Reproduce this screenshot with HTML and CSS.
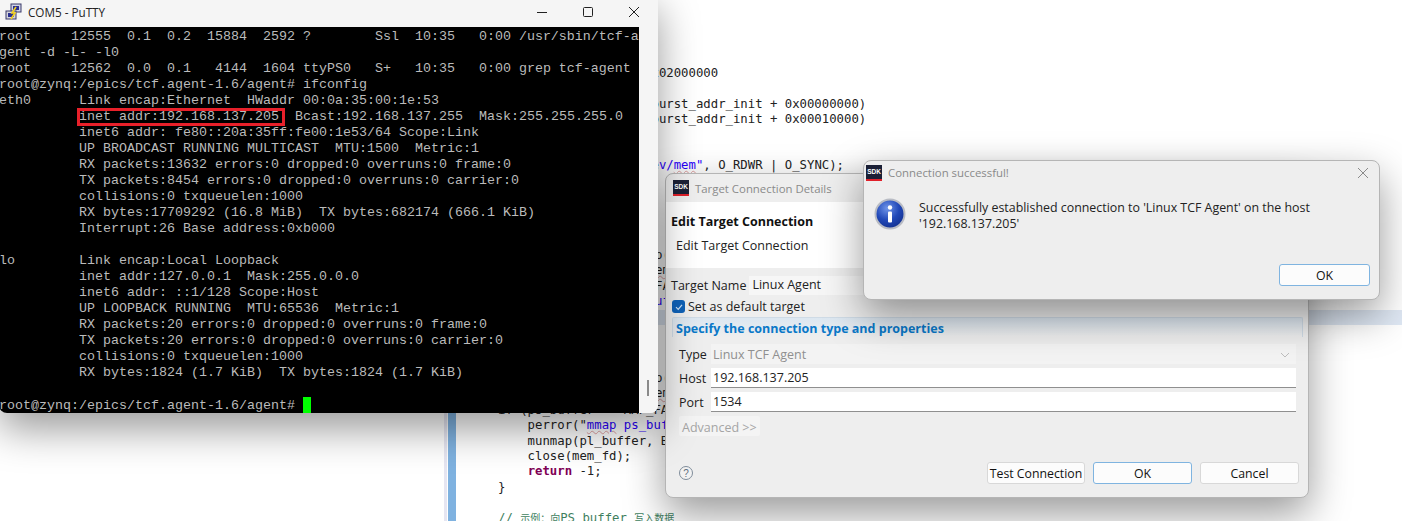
FILE: index.html
```html
<!DOCTYPE html>
<html lang="en">
<head>
    <meta charset="UTF-8">
    <meta name="viewport" content="width=device-width, initial-scale=1.0">
    <title>COM5 - PuTTY</title>
    <link rel="stylesheet" href="styles.css">
</head>
<body>
    <!-- Code editor behind the windows -->
    <div class="editor">
        <div class="editor-gutter"></div>
        <div class="highlight-row"></div>
        <pre class="code code-top">x02000000

burst_addr_init + 0x00000000)
burst_addr_init + 0x00010000)


<span class="str">ev/<span class="squiggle">mem</span>"</span>, O_RDWR | O_SYNC);</pre>
        <pre class="code code-strip">p(
<span class="squiggle">em</span>
FA
<span class="str">uf</span>




p(
<span class="squiggle">em</span></pre>
        <pre class="code code-bottom">if (ps_buffer == MAP_FAILED) {
    perror("<span class="str"><span class="squiggle">mmap</span> ps_buffer</span>
    munmap(pl_buffer, BUF
    close(mem_fd);
    <span class="kw">return</span> -1;
}

<span class="cmt">// <span class="cjk">示例：向</span>PS buffer <span class="cjk">写入数据</span></span></pre>
    </div>

    <!-- Target connection dialog -->
    <div class="window target-dialog">
        <div class="title-bar">
            <span class="sdk-icon">SDK</span>
            <span class="title-text">Target Connection Details</span>
        </div>
        <div class="dialog-banner">
            <h2>Edit Target Connection</h2>
            <p>Edit Target Connection</p>
        </div>
        <div class="dialog-body">
            <div class="name-row">
                <label>Target Name</label>
                <div class="name-input">Linux Agent</div>
            </div>
            <div class="check-row">
                <span class="checkbox">
                    <svg width="10" height="10" viewBox="0 0 10 10"><path d="M2 5.2 4.2 7.4 8 2.8" fill="none" stroke="#cfe3f7" stroke-width="1.2"/></svg>
                </span>
                <span>Set as default target</span>
            </div>
            <div class="props-panel">
                <div class="props-header">Specify the connection type and properties</div>
                <div class="props-grid">
                    <label>Type</label>
                    <div class="field field-disabled">
                        <span>Linux TCF Agent</span>
                        <svg width="10" height="6" viewBox="0 0 10 6"><path d="M1 1 5 5 9 1" fill="none" stroke="#bdbdbd"/></svg>
                    </div>
                    <label>Host</label>
                    <div class="field">192.168.137.205</div>
                    <label>Port</label>
                    <div class="field">1534</div>
                </div>
                <div class="advanced">Advanced &gt;&gt;</div>
            </div>
            <div class="dialog-footer">
                <svg class="help-icon" width="16" height="16" viewBox="0 0 16 16">
                    <circle cx="8" cy="8" r="6.5" fill="#f2f2f2" stroke="#7f8c9a"/>
                    <text x="8" y="11.5" text-anchor="middle" font-size="10" fill="#5f6f80" font-family="Liberation Sans">?</text>
                </svg>
                <div class="footer-buttons">
                    <button class="btn btn-test">Test Connection</button>
                    <button class="btn btn-primary btn-wide">OK</button>
                    <button class="btn btn-wide">Cancel</button>
                </div>
            </div>
        </div>
    </div>

    <!-- Success message box -->
    <div class="window message-box">
        <div class="title-bar">
            <span class="sdk-icon">SDK</span>
            <span class="title-text">Connection successful!</span>
            <svg class="close-icon" width="12" height="12" viewBox="0 0 12 12"><path d="M1 1 11 11M11 1 1 11" stroke="#8a8a8a" stroke-width="1"/></svg>
        </div>
        <div class="message-body">
            <svg class="info-icon" width="32" height="32" viewBox="0 0 32 32">
                <defs>
                    <radialGradient id="infoFill" cx="40%" cy="30%" r="75%">
                        <stop offset="0" stop-color="#6f94e8"/>
                        <stop offset="0.55" stop-color="#2148b8"/>
                        <stop offset="1" stop-color="#122f8c"/>
                    </radialGradient>
                </defs>
                <circle cx="16" cy="16" r="14.5" fill="url(#infoFill)" stroke="#b9bcc4" stroke-width="2"/>
                <circle cx="16" cy="9.5" r="2.2" fill="#fff"/>
                <rect x="14" y="13.5" width="4" height="11" rx="1" fill="#fff"/>
            </svg>
            <p>Successfully established connection to 'Linux TCF Agent' on the host<br>'192.168.137.205'</p>
        </div>
        <div class="message-footer">
            <button class="btn btn-primary btn-message">OK</button>
        </div>
    </div>

    <!-- PuTTY terminal -->
    <div class="window putty">
        <div class="putty-title">
            <svg class="putty-icon" width="18" height="18" viewBox="0 0 18 18">
                <rect x="6" y="1" width="10" height="8" fill="#cfd3e6" stroke="#3a3a6a"/>
                <rect x="8" y="3" width="6" height="4" fill="#2a2f8f"/>
                <rect x="1" y="8" width="10" height="8" fill="#d4d4dc" stroke="#3a3a6a"/>
                <rect x="3" y="10" width="6" height="4" fill="#2a2f8f"/>
                <path d="M11 4 7 10 10 10 6 16" fill="none" stroke="#f0d020" stroke-width="1.6"/>
            </svg>
            <span class="putty-name">COM5 - PuTTY</span>
            <div class="window-controls">
                <svg width="12" height="12" viewBox="0 0 12 12"><path d="M1 6.5H11" stroke="#222"/></svg>
                <svg width="12" height="12" viewBox="0 0 12 12"><rect x="1.5" y="1.5" width="9" height="9" rx="1" fill="none" stroke="#222"/></svg>
                <svg width="12" height="12" viewBox="0 0 12 12"><path d="M1 1 11 11M11 1 1 11" stroke="#222"/></svg>
            </div>
        </div>
        <div class="putty-content">
            <pre class="terminal">root     12555  0.1  0.2  15884  2592 ?        Ssl  10:35   0:00 /usr/sbin/tcf-a
gent -d -L- -l0
root     12562  0.0  0.1   4144  1604 ttyPS0   S+   10:35   0:00 grep tcf-agent
root@zynq:/epics/tcf.agent-1.6/agent# ifconfig
eth0      Link encap:Ethernet  HWaddr 00:0a:35:00:1e:53
          <span class="ip-mark">inet addr:192.168.137.205</span>  Bcast:192.168.137.255  Mask:255.255.255.0
          inet6 addr: fe80::20a:35ff:fe00:1e53/64 Scope:Link
          UP BROADCAST RUNNING MULTICAST  MTU:1500  Metric:1
          RX packets:13632 errors:0 dropped:0 overruns:0 frame:0
          TX packets:8454 errors:0 dropped:0 overruns:0 carrier:0
          collisions:0 txqueuelen:1000
          RX bytes:17709292 (16.8 MiB)  TX bytes:682174 (666.1 KiB)
          Interrupt:26 Base address:0xb000

lo        Link encap:Local Loopback
          inet addr:127.0.0.1  Mask:255.0.0.0
          inet6 addr: ::1/128 Scope:Host
          UP LOOPBACK RUNNING  MTU:65536  Metric:1
          RX packets:20 errors:0 dropped:0 overruns:0 frame:0
          TX packets:20 errors:0 dropped:0 overruns:0 carrier:0
          collisions:0 txqueuelen:1000
          RX bytes:1824 (1.7 KiB)  TX bytes:1824 (1.7 KiB)

root@zynq:/epics/tcf.agent-1.6/agent# <span class="cursor"></span></pre>
            <div class="putty-scrollbar"><span class="scroll-thumb"></span></div>
        </div>
    </div>
</body>
</html>
```

FILE: styles.css
```css
* {
    margin: 0;
    padding: 0;
    box-sizing: border-box;
}

body {
    width: 1402px;
    height: 521px;
    position: relative;
    overflow: hidden;
    background: #fff;
    font-family: 'Open Sans', 'Liberation Sans', sans-serif;
    font-size: 12.5px;
    color: #222;
}

/* Editor */
.editor {
    position: absolute;
    inset: 0;
}

.editor-gutter {
    position: absolute;
    left: 448px;
    top: 400px;
    width: 8px;
    height: 121px;
    background: #7fb2e0;
}

.editor-gutter::before {
    content: "";
    position: absolute;
    left: -4px;
    top: 0;
    bottom: 0;
    width: 3px;
    background: #e6e6f2;
}

.highlight-row {
    position: absolute;
    left: 650px;
    right: 0;
    top: 310px;
    height: 15px;
    background: #dfe8f4;
}

.code {
    position: absolute;
    font-family: 'DejaVu Sans Mono', monospace;
    font-size: 12.3px;
    line-height: 15.33px;
    color: #222;
}

.code-top {
    left: 651.5px;
    top: 66px;
}

.code-strip {
    left: 655px;
    top: 248px;
}

.code-bottom {
    left: 498px;
    top: 403px;
}

.str {
    color: #2a00ff;
}

.squiggle {
    text-decoration: underline wavy #e0a0a0 1px;
}

.kw {
    color: #7f0055;
    font-weight: bold;
}

.cmt {
    color: #3f7f5f;
}

.cjk {
    font-family: 'Noto Sans CJK SC', sans-serif;
    font-size: 10px;
}

/* Windows */
.window {
    position: absolute;
    border-radius: 8px;
    box-shadow: 0 16px 40px rgba(0, 0, 0, 0.4);
}

.title-bar {
    display: flex;
    align-items: center;
    gap: 6px;
    height: 28px;
    padding: 0 7px;
    color: #8a8a8a;
    font-size: 11.4px;
}

.sdk-icon {
    width: 16px;
    height: 16px;
    background: #1b2036;
    border-bottom: 2px solid #e0202a;
    color: #fff;
    font: bold 6.5px 'Liberation Sans', sans-serif;
    line-height: 13px;
    text-align: center;
}

.close-icon {
    margin-left: auto;
    margin-right: 3px;
}

/* Target dialog */
.target-dialog {
    left: 665px;
    top: 173px;
    width: 644px;
    height: 325px;
    background: #eeeeee;
    border: 1px solid #b5b5b5;
}

.dialog-banner {
    height: 66px;
    padding: 11px 5px;
    background: #fff;
}

.dialog-banner h2 {
    font-size: 12.5px;
    font-weight: 700;
    color: #111;
}

.dialog-banner p {
    margin: 7px 0 0 5px;
}

.dialog-body {
    padding: 0 5px;
}

.name-row {
    display: flex;
    align-items: center;
    gap: 3px;
    height: 24px;
    margin-top: 5px;
}

.name-input {
    flex: 1;
    height: 19px;
    padding-left: 3px;
    background: #f6f6f6;
}

.check-row {
    display: flex;
    align-items: center;
    gap: 3px;
    height: 19px;
}

.checkbox {
    display: flex;
    align-items: center;
    justify-content: center;
    width: 13px;
    height: 13px;
    margin-left: 1px;
    border-radius: 3px;
    background: #0f62b8;
}

.props-panel {
    height: 127px;
    margin: 1px 0 0 1px;
}

.props-header {
    height: 20px;
    padding: 2px 3px 0;
    font-weight: 700;
    color: #0a78c8;
    background: linear-gradient(#dce7f1, #eeeeee);
    border: 1px solid #cfdbe6;
    border-bottom: none;
    border-radius: 2px 2px 0 0;
}

.props-grid {
    display: grid;
    grid-template-columns: 29px 1fr;
    gap: 4px 3px;
    align-items: center;
    padding: 7px 7px 0;
}

.props-grid label {
    padding-top: 1px;
}

.field {
    height: 20px;
    padding-left: 2px;
    line-height: 20px;
    background: #fff;
    border-bottom: 1px solid #8f8f8f;
}

.field-disabled {
    display: flex;
    align-items: center;
    justify-content: space-between;
    padding-top: 1px;
    padding-right: 6px;
    color: #8f8f8f;
    background: #f3f3f3;
    border-bottom: none;
}

.advanced {
    display: inline-block;
    margin: 4px 0 0 7px;
    padding: 3px 3px 0;
    height: 20px;
    color: #a5a5a5;
    background: #f4f4f4;
    border-radius: 2px;
}

.dialog-footer {
    display: flex;
    align-items: center;
    justify-content: space-between;
    margin-top: 18px;
    padding: 0 4px 0 7px;
}

.footer-buttons {
    display: flex;
    gap: 8px;
}

.btn {
    height: 22px;
    padding-top: 1px;
    font-family: inherit;
    font-size: 12.3px;
    color: #111;
    background: #fcfcfc;
    border: 1px solid #d8d8d8;
    border-radius: 3px;
}

.btn-test {
    width: 98px;
}

.btn-wide {
    width: 99px;
}

.btn-primary {
    border-color: #7fb4e0;
}

/* Message box */
.message-box {
    left: 863px;
    top: 160px;
    width: 517px;
    height: 140px;
    background: #eeeeee;
    border: 1px solid #b5b5b5;
}

.message-box .title-bar {
    height: 23px;
    padding-left: 2px;
}

.message-body {
    display: flex;
    gap: 13px;
    padding: 14px 10px 0;
    height: 75px;
}

.message-body p {
    padding-top: 2px;
    line-height: 16px;
    font-size: 12.4px;
}

.message-footer {
    display: flex;
    justify-content: flex-end;
    padding: 5px 9px 0;
}

.btn-message {
    width: 91px;
}

/* PuTTY */
.putty {
    left: -1px;
    top: -8px;
    width: 659px;
    height: 421px;
    background: #f3f3f3;
    overflow: hidden;
}

.putty-title {
    display: flex;
    align-items: center;
    height: 35px;
    padding: 4px 0 0 6px;
    background: #f5f5f5;
    font-size: 11.7px;
}

.putty-icon {
    margin-right: 5px;
}

.putty-name {
    color: #222;
}

.window-controls {
    display: flex;
    gap: 34px;
    margin-left: auto;
    padding-right: 18px;
}

.putty-content {
    display: flex;
    height: 386px;
}

.terminal {
    flex: 1;
    padding: 2px 0 0 0;
    background: #000;
    color: #bbb;
    font-family: 'Liberation Mono', monospace;
    font-size: 13.33px;
    line-height: 16px;
}

.ip-mark {
    position: relative;
}

.ip-mark::after {
    content: "";
    position: absolute;
    left: -2px;
    right: -6px;
    top: -1px;
    bottom: -2px;
    border: 3px solid #e8202a;
}

.cursor {
    display: inline-block;
    width: 8px;
    height: 16px;
    vertical-align: -4px;
    background: #00ff00;
}

.putty-scrollbar {
    position: relative;
    width: 19px;
    background: #f5f5f5;
}

.scroll-thumb {
    position: absolute;
    left: 8px;
    bottom: 17px;
    width: 2px;
    height: 16px;
    background: #8a8a8a;
}
```
